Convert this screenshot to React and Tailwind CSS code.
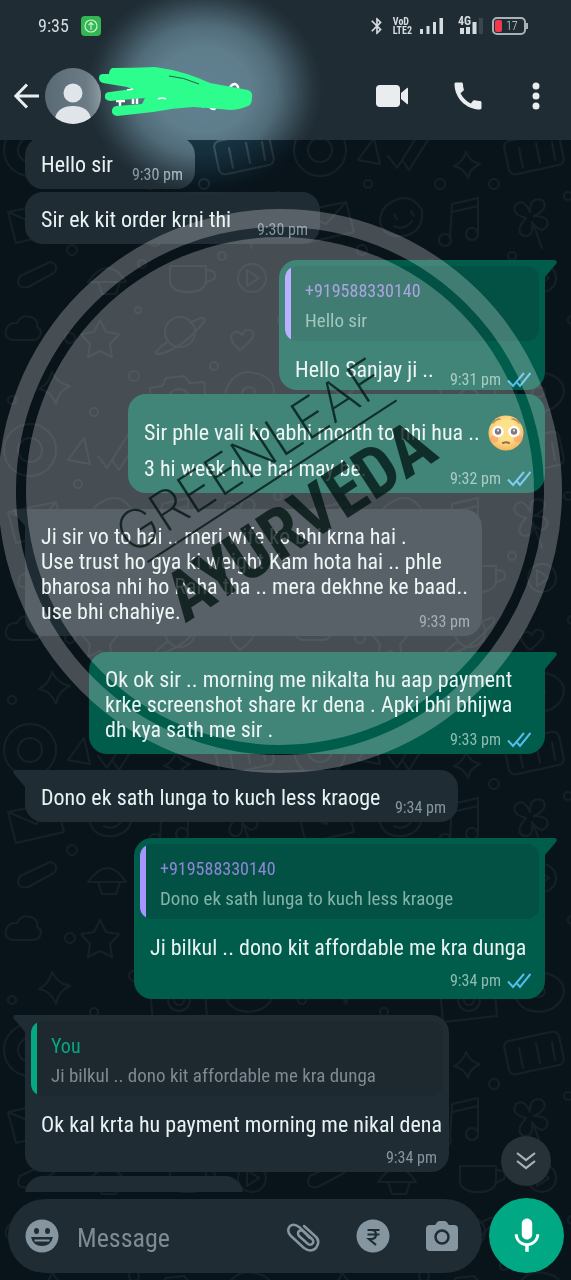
import { clsx } from "clsx";
import { MdBluetooth, MdCall, MdMic } from "react-icons/md";

const messages = [
  { id: 1, lines: ["Hello sir"], time: "9:30 pm", width: "w-[170px]", gap: "mt-0" },
  { id: 2, lines: ["Sir ek kit order krni thi"], time: "9:30 pm", width: "w-[295px]", gap: "mt-[3px]" },
  {
    id: 3, mine: true, tail: true, lines: ["Hello Sanjay ji .."], time: "9:31 pm", width: "w-[266px]", gap: "mt-4",
    quote: { name: "+919588330140", text: "Hello sir" },
  },
  {
    id: 4, mine: true, emoji: true, lines: ["Sir phle vali ko abhi month to nhi hua ..", "3 hi week hue hai may be."],
    time: "9:32 pm", width: "w-[417px]", gap: "mt-1",
  },
  {
    id: 5, tail: true, time: "9:33 pm", width: "w-[457px]", gap: "mt-4",
    lines: [
      "Ji sir vo to hai .. meri wife ko bhi krna hai .",
      "Use trust ho gya ki weight Kam hota hai .. phle",
      "bharosa nhi ho Raha tha .. mera dekhne ke baad..",
      "use bhi chahiye.",
    ],
  },
  {
    id: 6, mine: true, tail: true, time: "9:33 pm", width: "w-[456px]", gap: "mt-4",
    lines: [
      "Ok ok sir .. morning me nikalta hu aap payment",
      "krke screenshot share kr dena . Apki bhi bhijwa",
      "dh kya sath me sir .",
    ],
  },
  { id: 7, tail: true, lines: ["Dono ek sath lunga to kuch less kraoge"], time: "9:34 pm", width: "w-[433px]", gap: "mt-4" },
  {
    id: 8, mine: true, tail: true, timeBelow: true, lines: ["Ji bilkul .. dono kit affordable me kra dunga"],
    time: "9:34 pm", width: "w-[411px]", gap: "mt-4",
    quote: { name: "+919588330140", text: "Dono ek sath lunga to kuch less kraoge" },
  },
  {
    id: 9, tail: true, timeBelow: true, lines: ["Ok kal krta hu payment morning me nikal dena"],
    time: "9:34 pm", width: "w-[424px]", gap: "mt-4",
    quote: { name: "You", text: "Ji bilkul .. dono kit affordable me kra dunga", own: true },
  },
];

function Ticks() {
  return (
    <svg viewBox="0 0 24 16" className="w-6 h-4 shrink-0" fill="none" stroke="#53bdeb" strokeWidth="2">
      <path d="M1 8.500l5 5.500L17 1" />
      <path d="M10 10.500l3 3.500L23.500 1" />
    </svg>
  );
}

function Flushed() {
  return (
    <svg viewBox="0 0 36 36" className="mr-[7px] w-9 h-9 shrink-0" role="img" aria-label="flushed face">
      <defs>
        <radialGradient id="skin" cx="50%" cy="42%" r="58%">
          <stop offset="0.5" stopColor="#fdd663" />
          <stop offset="1" stopColor="#f2a12c" />
        </radialGradient>
      </defs>
      <circle cx="18" cy="18" r="17.500" fill="url(#skin)" />
      <ellipse cx="6" cy="24" rx="4.500" ry="3.500" fill="#f4793b" opacity=".55" />
      <ellipse cx="30" cy="24" rx="4.500" ry="3.500" fill="#f4793b" opacity=".55" />
      <circle cx="10" cy="16.500" r="5.800" fill="#fff" />
      <circle cx="26" cy="16.500" r="5.800" fill="#fff" />
      <circle cx="10" cy="16.500" r="3.200" fill="#5b4a55" />
      <circle cx="26" cy="16.500" r="3.200" fill="#5b4a55" />
      <circle cx="10" cy="15.500" r="1" fill="#fff" />
      <circle cx="26" cy="15.500" r="1" fill="#fff" />
      <path d="M5 8q3-4 7-4M24 4q4 0 7 4" fill="none" stroke="#a4601d" strokeWidth="1.500" strokeLinecap="round" />
      <path d="M15 28q3-1.500 6 0" fill="none" stroke="#7a3b16" strokeWidth="2" strokeLinecap="round" />
    </svg>
  );
}

function Tail({ mine }) {
  return mine ? (
    <svg viewBox="0 0 30 18" className="absolute top-0 -right-3 w-[30px] h-[18px]" fill="#005c4b">
      <path d="M0 0H28q3 1 1 4L18 17V18H0z" />
    </svg>
  ) : (
    <svg viewBox="0 0 30 18" className="absolute top-0 -left-3 w-[30px] h-[18px]" fill="#1f2c34">
      <path d="M30 0H2q-3 1-1 4L12 17V18H30z" />
    </svg>
  );
}

function Quote({ quote, mine }) {
  return (
    <div className={clsx("relative m-1.5 mb-0 flex overflow-hidden rounded-xl", mine ? "bg-[#025144]" : "bg-[#1d282f]")}>
      <div className={clsx("w-1.5 shrink-0", quote.own ? "bg-[#06a884]" : "bg-[#a695ff]")} />
      <div className="pl-3.5 pt-2.5 pb-[5px] whitespace-nowrap">
        <p className={clsx("leading-[30px]", quote.own ? "text-[20px] text-[#06a884]" : "text-[18px] text-[#8f86d8]")}>
          {quote.name}
        </p>
        <p className={clsx("text-[19px] leading-[30px]", mine ? "text-[#84b3a7]" : "text-[#7d8a92]")}>{quote.text}</p>
      </div>
    </div>
  );
}

function Time({ message }) {
  return (
    <span className={clsx("flex items-center gap-1.5 text-base leading-5", message.mine ? "text-[#8fbcb0]" : "text-[#8696a0]")}>
      {message.time}
      {message.mine && <Ticks />}
    </span>
  );
}

function Message({ message }) {
  const { lines, mine, tail, quote, emoji, timeBelow, width, gap } = message;
  const last = lines[lines.length - 1];

  return (
    <li
      className={clsx(
        "relative max-w-full rounded-[18px]",
        width,
        gap,
        mine ? "self-end bg-[#005c4b]" : "self-start bg-[#1f2c34]"
      )}
    >
      {tail && <Tail mine={mine} />}
      {quote && <Quote quote={quote} mine={mine} />}
      <div
        className={clsx(
          "relative pl-4 text-[22px] leading-[25px] whitespace-nowrap text-[#e9f2f2]",
          mine ? "pr-3.5" : "pr-3",
          !quote ? "pt-[15px] pb-3" : mine ? "pt-4 pb-2" : "pt-4 pb-1"
        )}
      >
        {lines.slice(0, -1).map((line) => (
          <p key={line} className={clsx(emoji && "flex h-[47px] items-center justify-between")}>
            {line}
            {emoji && <Flushed />}
          </p>
        ))}
        {timeBelow ? (
          <>
            <p>{last}</p>
            <div className="mt-[11px] flex justify-end">
              <Time message={message} />
            </div>
          </>
        ) : (
          <div className="flex items-end justify-between">
            <p>{last}</p>
            <div className="-mb-2">
              <Time message={message} />
            </div>
          </div>
        )}
      </div>
    </li>
  );
}

function Wallpaper() {
  return (
    <svg className="absolute inset-0 h-full w-full" aria-hidden="true">
      <defs>
        <pattern id="doodles" width="290" height="300" patternUnits="userSpaceOnUse">
          <g fill="none" stroke="#152026" strokeWidth="2" strokeLinecap="round" strokeLinejoin="round">
            <path d="M12 40q-8-2-6-10t11-7q4-9 14-6 8 3 6 10 6 3 3 9-2 4-8 4z" />
            <path d="M52 72q6 12 18 14-12 5-14 18-5-13-17-15 10-5 13-17z" />
            <path d="M100 20l6 12 13 2-9 10 2 13-12-6-12 6 2-13-9-10 13-2z" />
            <circle cx="180" cy="32" r="15" />
            <path d="M167 42q-16 12-9 12 22-3 46-32 3-9-14 1" />
            <path d="M150 88l12-2 4-8 18-2 6 7 14-1 3 34-54 6z" />
            <circle cx="179" cy="100" r="11" />
            <circle cx="179" cy="100" r="5" />
            <path d="M240 50q-12-10-8-16 5-5 10 1 4-8 10-4 6 5-12 19z" />
            <path d="M226 90q10-26 38-14 16 10 6 26-12 14-32 8-14-6-12-20z" />
            <path d="M242 92q4-8 12-3 3 6-5 8-7 0-7-5z" />
            <circle cx="30" cy="150" r="26" />
            <circle cx="30" cy="150" r="12" />
            <path d="M84 138l-16 22 22 4zM98 156l9 12 24-38M112 160l7 10 24-38" />
            <path d="M176 152q4 10 14 12-10 4-12 14-4-10-14-12 9-4 12-14z" />
            <rect x="216" y="136" width="56" height="34" rx="6" transform="rotate(-12 244 153)" />
            <path d="M229 148l4 20M246 143l4 20M262 142l3 18" />
            <path d="M8 212l48-10 8 30-48 11zM8 212l28 12 20-22" />
            <path d="M96 206q22-18 36 4 2 22-18 26-20 2-24-14 0-10 6-16M104 214l3 5M121 211l3 5M104 226q10 5 18-5" />
            <path d="M160 238l2-34 26-6v34M162 212l26-6" />
            <circle cx="155" cy="240" r="6" />
            <circle cx="182" cy="234" r="6" />
            <path d="M236 218q-16-4-10-14 8-6 14 8 0-16 12-12 8 8-8 16 16 0 13 10-6 9-15-4 2 15-8 14-10-4 2-18zM244 226l8 22" />
            <path d="M20 276l30-14q10 2 4 11l-26 14q-14 2-8-11zM88 282q20-28 38 0zM98 282l4 12h14l4-12" />
            <path d="M170 266h36v16q-2 10-18 10t-18-10zM206 270q12 0 8 9l-9 4" />
            <circle cx="252" cy="278" r="14" />
            <path d="M247 270l12 8-12 8z" />
            <circle cx="70" cy="38" r="5" />
            <circle cx="134" cy="76" r="5" />
            <circle cx="94" cy="112" r="4" />
            <circle cx="214" cy="66" r="4" />
            <circle cx="150" cy="184" r="5" />
            <circle cx="78" cy="184" r="4" />
            <circle cx="204" cy="184" r="5" />
            <circle cx="278" cy="196" r="4" />
            <circle cx="72" cy="250" r="5" />
            <circle cx="142" cy="264" r="4" />
            <circle cx="12" cy="100" r="4" />
            <circle cx="282" cy="20" r="4" />
            <circle cx="138" cy="10" r="3" />
            <circle cx="222" cy="256" r="4" />
          </g>
        </pattern>
      </defs>
      <rect width="100%" height="100%" fill="url(#doodles)" />
    </svg>
  );
}

// round stamp laid over the conversation
function Watermark() {
  return (
    <svg
      viewBox="0 0 564 564"
      className="pointer-events-none absolute top-[209px] -left-0.5 h-[564px] w-[564px]"
    >
      <circle cx="282" cy="282" r="254" fill="#fff" opacity=".25" />
      <circle cx="282" cy="282" r="273" fill="none" stroke="#fff" strokeWidth="18" opacity=".25" />
      <g transform="translate(150 354) rotate(-33)" fill="#001210" fillOpacity=".76">
        <text x="-10" y="-15" className="font-[Inter] text-[54px] font-extralight">GREENLEAF</text>
        <rect x="0" y="-2" width="297" height="2" />
        <text x="-2" y="71" className="font-['Roboto_Condensed'] text-[70px] font-bold">AYURVEDA</text>
      </g>
    </svg>
  );
}

function StatusBar() {
  return (
    <div className="flex h-[52px] items-center pl-[38px] pr-[45px] text-[#d5dce0]">
      <span className="w-[43px] text-lg">9:35</span>
      <svg viewBox="0 0 20 20" className="w-5 h-5" fill="none">
        <rect width="20" height="20" rx="4" fill="#34b653" />
        <circle cx="10" cy="10" r="6" stroke="#c9f2d1" strokeWidth="1.200" />
        <path d="M10 14V7M7.500 9.200L10 6.700l2.500 2.500" stroke="#c9f2d1" strokeWidth="1.200" />
      </svg>
      <div className="ml-auto flex items-center">
        <MdBluetooth size={20} />
        <div className="ml-1.5 text-[10px] font-bold leading-[9px]">
          <p>VoD</p>
          <p>LTE2</p>
        </div>
        <svg viewBox="0 0 24 18" className="ml-2 w-6 h-[18px]" fill="#d5dce0">
          <path d="M0 12h3v5H0zM6.500 9h3v8h-3zM13 5h3v12h-3zM19.500 1h3.500v16h-3.500z" />
        </svg>
        <div className="relative ml-3 h-[18px] w-[28px]">
          <svg viewBox="0 0 28 18" className="w-7 h-[18px]" fill="#d5dce0">
            <path d="M4 11h4v6H4zM10 10h4v7h-4zM16.500 5h4v12h-4z" />
            <path d="M23 1h4v16h-4z" opacity=".15" />
          </svg>
          <span className="absolute -top-0.5 left-0.5 text-xs leading-3 font-bold">4G</span>
        </div>
        <div className="relative ml-2 flex h-[18px] w-[34px] items-center rounded-[5px] border-2 border-[#aab2b6] p-px">
          <div className="h-3 w-[7px] rounded-xs bg-[#f4394c]" />
          <span className="ml-1 text-xs leading-3 font-light">17</span>
          <div className="absolute -right-1 h-1.5 w-0.5 bg-[#aab2b6]" />
        </div>
      </div>
    </div>
  );
}

function Header() {
  return (
    <header className="relative h-[140px] shrink-0 bg-[#1f2c34]">
      <StatusBar />
      <div className="flex h-[88px] items-center pl-3.5 pr-[27px] text-[#e9edef]">
        <button type="button" aria-label="Back">
          <svg viewBox="0 0 26 26" className="w-[26px] h-[26px]" fill="none" stroke="currentColor" strokeWidth="3">
            <path d="M25 13H2M13 1.500L1.800 13 13 24.500" />
          </svg>
        </button>
        <svg viewBox="0 0 56 56" className="ml-[5px] w-14 h-14">
          <defs>
            <clipPath id="face">
              <circle cx="28" cy="28" r="28" />
            </clipPath>
            <linearGradient id="shade">
              <stop offset="0" stopColor="#5a6a74" />
              <stop offset="1" stopColor="#71828c" />
            </linearGradient>
          </defs>
          <g clipPath="url(#face)">
            <rect width="56" height="56" fill="url(#shade)" />
            <circle cx="28" cy="25" r="9.500" fill="#dfe5e9" />
            <path d="M10 50q3-12 18-12t18 12v8H10z" fill="#dfe5e9" />
          </g>
        </svg>
        <div className="ml-auto flex items-center">
          <button type="button" aria-label="Video call">
            <svg viewBox="0 0 32 22" className="w-8 h-[22px]" fill="currentColor">
              <rect width="24" height="22" rx="4" />
              <path d="M25 8l6-5q1-1 1 1v14q0 2-1 1l-6-5z" />
            </svg>
          </button>
          <button type="button" aria-label="Voice call" className="ml-[42px]">
            <MdCall size={36} />
          </button>
          <button type="button" aria-label="More options" className="ml-[42px]">
            <svg viewBox="0 0 16 28" className="w-4 h-7" fill="currentColor">
              <circle cx="8" cy="4" r="3.500" />
              <circle cx="8" cy="14" r="3.500" />
              <circle cx="8" cy="24" r="3.500" />
            </svg>
          </button>
        </div>
      </div>
    </header>
  );
}

// contact name is scribbled out with a marker, under a soft flash
function Scribble() {
  return (
    <>
      <div className="pointer-events-none absolute -top-[15px] left-[86px] h-[210px] w-[236px] bg-[radial-gradient(closest-side,rgb(174,168,163)_0%,rgba(174,168,163,0.96)_40%,rgba(174,168,163,0.74)_62%,rgba(174,168,163,0.35)_80%,rgba(174,168,163,0.1)_92%,transparent_100%)] mix-blend-color-dodge" />
      <svg viewBox="0 0 156 54" className="pointer-events-none absolute top-16 left-[98px] w-[156px] h-[54px]">
        <path d="M18 37h9M22 37v6M35 35v5M39 34v6M104 43q4-4 8 0t6 0M132 23q5-6 8 0v4" fill="none" stroke="#fff" strokeWidth="2.500" />
        <path
          d="M14 4Q35 4 57 3q16 2 32 7 12 4 23 9l38 7q5 2 4 7 0 8-4 9-9 4-18 4-18-2-37-3-20 1-40 5-18 2-36 4-6-1-5-6 1-4 5-4l25-2 3-6-35 3q-6-1-5-5 0-4 5-4l22-3-5-2-24-4Q1 18 1 14q0-4 4-4h6q0-4 3-6z"
          fill="#2dfd8c"
        />
        <path d="M71 12q14 1 30 8" fill="none" stroke="#2b5a4d" strokeWidth="1" />
        <path d="M29 26l6-1M60 35q4-2 8 0" fill="none" stroke="#fff" strokeWidth="1.500" />
      </svg>
    </>
  );
}

function Composer() {
  return (
    <footer className="relative flex items-center gap-[7px] px-2 pt-1.5 pb-[7px]">
      <div className="flex h-[74px] min-w-0 flex-1 items-center rounded-full bg-[#1f2c34] pl-[17px] pr-6 text-[#8696a0]">
        <button type="button" aria-label="Emoji">
          <svg viewBox="0 0 34 34" className="w-[34px] h-[34px]">
            <circle cx="17" cy="17" r="16.500" fill="currentColor" />
            <g fill="#1f2c34">
              <ellipse cx="11.500" cy="12" rx="2.500" ry="3" />
              <ellipse cx="22.500" cy="12" rx="2.500" ry="3" />
              <path d="M6 18h22q-2 9-11 9T6 18z" />
            </g>
            <path d="M9.500 20.500h15v2h-15z" fill="currentColor" />
          </svg>
        </button>
        <input
          aria-label="Message"
          placeholder="Message"
          className="ml-[18px] min-w-0 flex-1 bg-transparent pt-1.5 text-[26px] outline-none placeholder:text-[#7d8b94]"
        />
        <button type="button" aria-label="Attach">
          <svg viewBox="0 0 34 34" className="w-[34px] h-[34px]" fill="none" stroke="currentColor" strokeWidth="2.500" strokeLinecap="round">
            <path d="M13 17l9 8q3 2 5-1 1-2-1-4L13 8Q8 4 4 7q-4 5 1 10l13 12q7 5 12 0 5-7-1-12L18 7M13 17q-2-3 0-5 2-1 4 0l7 7" />
          </svg>
        </button>
        <button type="button" aria-label="Payment" className="ml-9">
          <svg viewBox="0 0 34 34" className="w-[34px] h-[34px]">
            <circle cx="17" cy="17" r="16.500" fill="currentColor" />
            <path d="M11.500 11h12M11.500 15.500h12M12 11h3q5 0 5 4.500T15 20h-2l7 6" fill="none" stroke="#1f2c34" strokeWidth="2.200" />
          </svg>
        </button>
        <button type="button" aria-label="Camera" className="ml-9">
          <svg viewBox="0 0 32 30" className="w-8 h-[30px]">
            <path d="M10 3q1-3 4-3h4q3 0 4 3l1 1h5q4 0 4 4v18q0 4-4 4H4q-4 0-4-4V8q0-4 4-4h5z" fill="currentColor" />
            <circle cx="16" cy="16" r="6.500" fill="none" stroke="#1f2c34" strokeWidth="2.500" />
          </svg>
        </button>
      </div>
      <button
        type="button"
        aria-label="Record voice message"
        className="-mr-px flex h-[75px] w-[75px] shrink-0 items-center justify-center rounded-full bg-[#00a884] text-white"
      >
        <MdMic size={42} />
      </button>
    </footer>
  );
}

export default function App() {
  return (
    <div className="relative flex h-screen flex-col overflow-hidden bg-[#08131a] font-['Roboto_Condensed','Liberation_Sans_Narrow',sans-serif]">
      <Wallpaper />
      <Header />
      <main className="relative min-h-0 flex-1 overflow-hidden">
        <ul className="-mt-[3px] flex flex-col pl-[25px] pr-[26px]">
          {messages.map((message) => (
            <Message key={message.id} message={message} />
          ))}
          <li className="mt-1 h-[52px] w-[218px] rounded-[18px] bg-[#1f2c34]" />
        </ul>
        <button
          type="button"
          aria-label="Scroll to latest"
          className="absolute right-5 bottom-1.5 flex h-[50px] w-[50px] items-center justify-center rounded-full bg-[#263138] text-[#a9b4ba]"
        >
          <svg viewBox="0 0 20 18" className="w-5 h-[18px]" fill="none" stroke="currentColor" strokeWidth="2.200">
            <path d="M1 1l9 7 9-7M1 9l9 7 9-7" />
          </svg>
        </button>
      </main>
      <Composer />
      <Watermark />
      <Scribble />
    </div>
  );
}
